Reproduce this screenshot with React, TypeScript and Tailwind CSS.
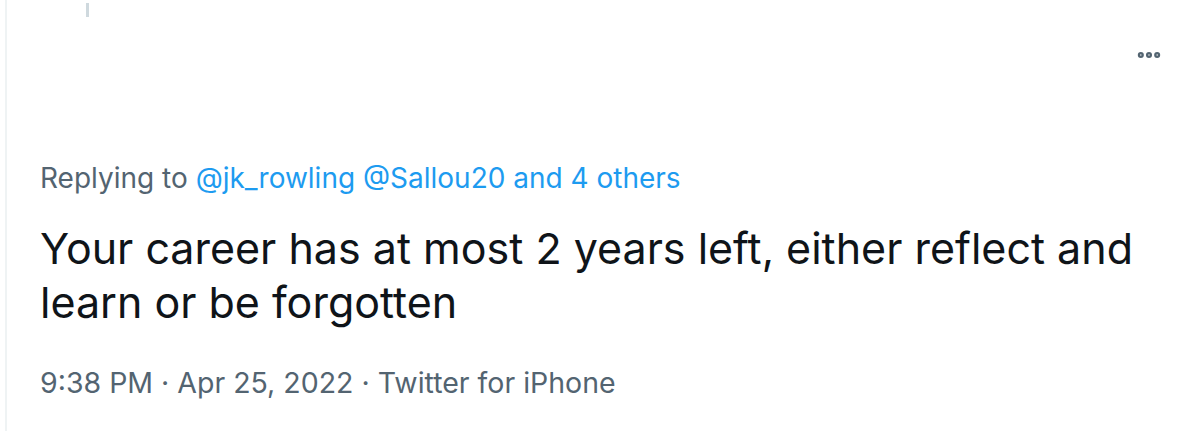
import { MoreHorizontal } from "lucide-react"

export default function App() {
  return (
    <div className="w-[1200px] h-[431px] bg-white overflow-hidden font-['Inter',sans-serif]">
      <div className="h-full ml-[5px] border-l-2 border-[#eff3f4] relative">
        {/* thread line from parent tweet */}
        <div className="absolute left-[79px] top-[3px] w-[3px] h-[14px] bg-[#cfd9de]" />

        <div className="flex justify-end pr-[37px] pt-[41px]">
          <MoreHorizontal size={28} strokeWidth={3.2} className="text-[#536471]" />
        </div>

        <div className="pl-[33px] pt-[92px]">
          <p className="text-[28px] leading-[34px] text-[#536471]">
            Replying to <span className="text-[#1d9bf0]">@jk_rowling @Sallou20 and 4 others</span>
          </p>
          <p className="mt-[26px] text-[43px] leading-[54px] text-[#0f1419] w-[1130px]">
            Your career has at most 2 years left, either reflect and learn or be forgotten
          </p>
          <p className="mt-[37px] text-[28.5px] leading-[34px] text-[#536471]">
            9:38 PM · Apr 25, 2022 · Twitter for iPhone
          </p>
        </div>
      </div>
    </div>
  )
}
